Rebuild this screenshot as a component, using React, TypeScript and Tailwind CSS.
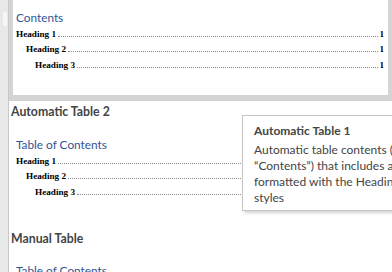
import type { ReactNode } from "react"

const serif = { fontFamily: '"Liberation Serif", "Times New Roman", serif' }

function TocRow({ label, indent, page = true }: { label: string; indent: string; page?: boolean }) {
  return (
    <div className={`flex items-center h-[15.5px] ${indent}`} style={serif}>
      <span className="text-[9.2px] font-bold leading-[12px] text-black whitespace-nowrap">{label}</span>
      <span className="flex-1 ml-[2px] mr-[1px] mt-[5px] h-0 border-b border-dotted border-[#8a8a8a]" />
      {page && <span className="text-[9.2px] font-bold leading-[12px] text-black">1</span>}
    </div>
  )
}

function GalleryLabel({ children }: { children: ReactNode }) {
  return (
    <div className="h-[20px] pl-[2px] text-[12.3px] font-bold leading-[20px] text-[#444444] font-['Lato',sans-serif]">
      {children}
    </div>
  )
}

function TocTitle({ children }: { children: ReactNode }) {
  return (
    <div className="text-[11.8px] leading-[16px] text-[#2f5496] font-['Lato','Open_Sans',sans-serif]">
      {children}
    </div>
  )
}

export default function App() {
  return (
    <div className="relative w-[392px] h-[272px] overflow-hidden bg-white flex">
      {/* left strip */}
      <div className="w-[9px] shrink-0 bg-[#e8e8e8] border-r border-[#c8c8c8] pt-[12px] pl-[3px]">
        <div className="w-[4px] h-[14px] bg-[#f6f6f6]" />
      </div>

      {/* gallery */}
      <div className="flex-1 flex flex-col">
        {/* Automatic Table 1 (hovered) */}
        <div className="bg-[#d4d4d4] pl-[4px] pr-[4px] pb-[6px]">
          <div className="h-[95px] bg-white pl-[3px] pr-[4px] pt-[10px]">
            <TocTitle>Contents</TocTitle>
            <TocRow label="Heading 1" indent="" />
            <TocRow label="Heading 2" indent="pl-[10px]" />
            <TocRow label="Heading 3" indent="pl-[19px]" />
          </div>
        </div>
        <div className="h-[1px] bg-[#e6e6e6]" />

        {/* Automatic Table 2 */}
        <div className="pt-[1px]">
          <GalleryLabel>Automatic Table 2</GalleryLabel>
          <div className="pl-[7px] pr-[6px] pt-[15px]">
            <TocTitle>Table of Contents</TocTitle>
            <TocRow label="Heading 1" indent="" page={false} />
            <TocRow label="Heading 2" indent="pl-[10px]" page={false} />
            <TocRow label="Heading 3" indent="pl-[19px]" page={false} />
          </div>
        </div>

        {/* Manual Table */}
        <div className="pt-[29px]">
          <GalleryLabel>Manual Table</GalleryLabel>
          <div className="pl-[7px] pt-[14px]">
            <TocTitle>Table of Contents</TocTitle>
          </div>
        </div>
      </div>

      {/* tooltip */}
      <div className="absolute left-[242px] top-[115px] w-[170px] h-[96px] bg-white border border-[#c6c6c6] shadow-[2px_2px_3px_rgba(0,0,0,0.18)] pl-[11px] pt-[6px] font-['Lato',sans-serif] text-[#444444]">
        <div className="text-[12px] font-bold leading-[18px]">Automatic Table 1</div>
        <div className="mt-[2px] text-[12px] leading-[16px] whitespace-nowrap">
          <div>Automatic table contents (</div>
          <div>“Contents”) that includes a</div>
          <div>formatted with the Headin</div>
          <div>styles</div>
        </div>
      </div>
    </div>
  )
}
